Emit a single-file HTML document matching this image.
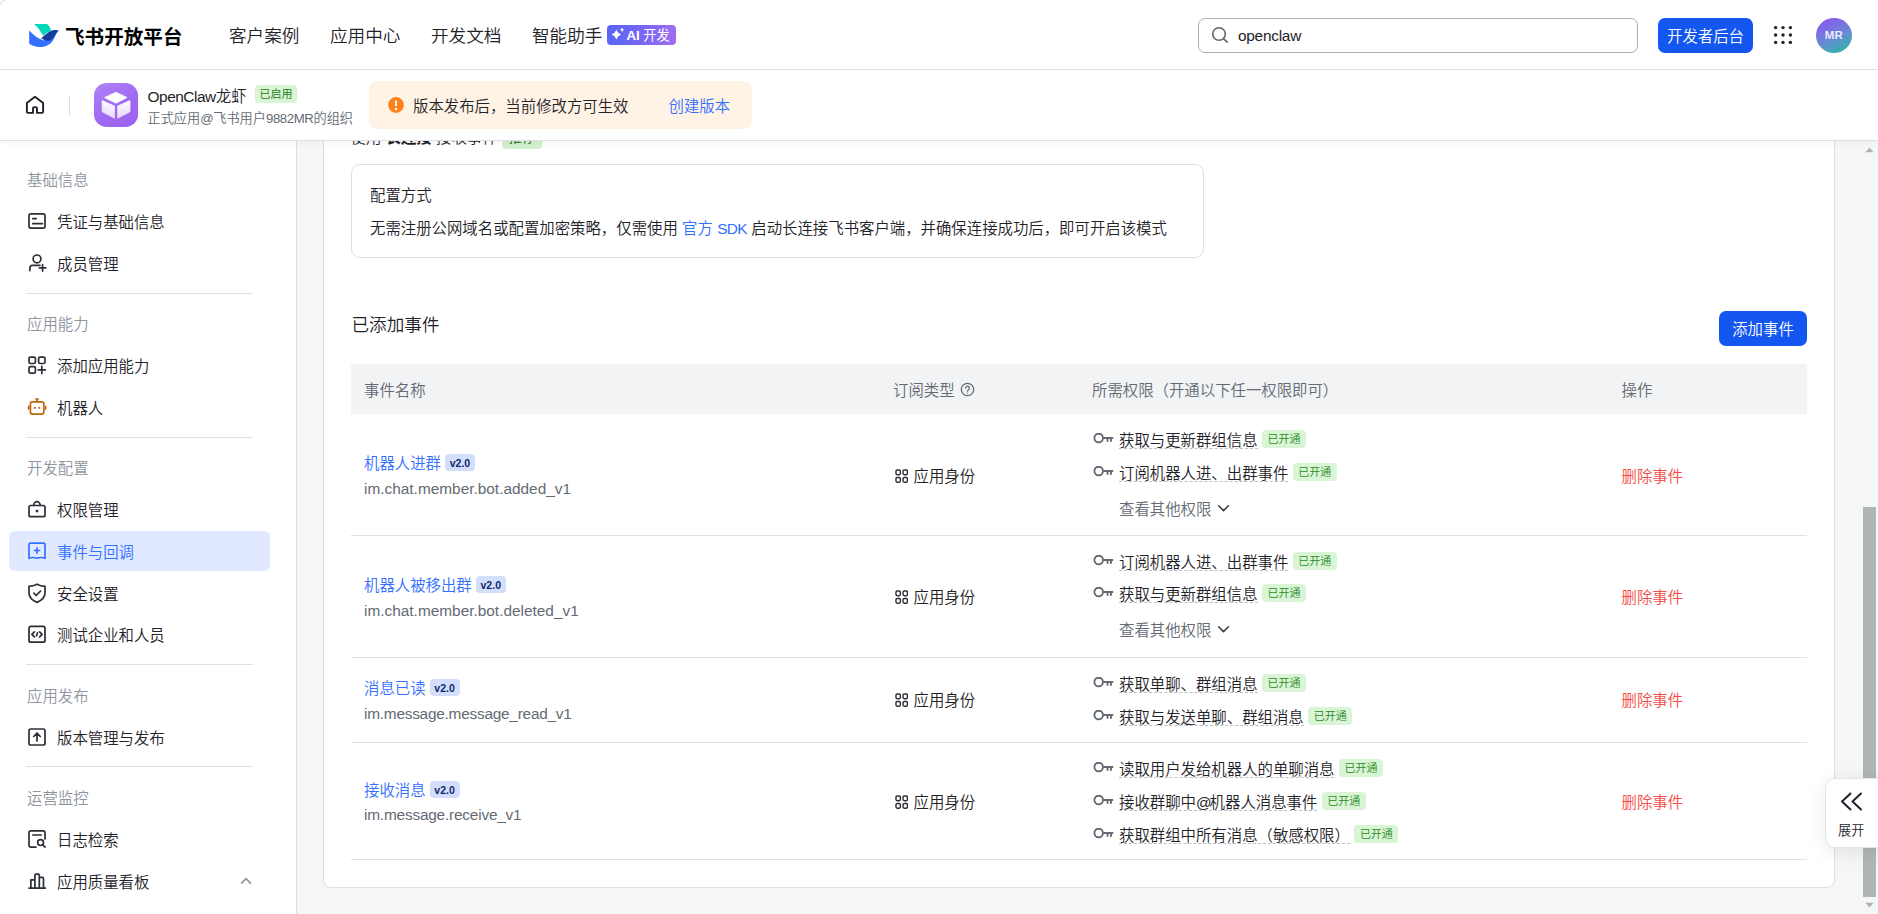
<!DOCTYPE html>
<html lang="zh-CN">
<head>
<meta charset="utf-8">
<title>飞书开放平台</title>
<style>
*{box-sizing:border-box;margin:0;padding:0}
html,body{width:1878px;height:914px;overflow:hidden;background:#fff}
body{font-weight:350;font-family:"Liberation Sans","Noto Sans CJK SC",sans-serif;font-size:15.4px;color:#1f2329;position:relative;-webkit-font-smoothing:antialiased}
a{text-decoration:none;color:#3370ff}
.abs{position:absolute}
b{font-weight:700}
/* top header */
#top{position:absolute;left:0;top:0;width:1878px;height:70px;background:#fff;border-bottom:1px solid #dee0e3;z-index:30}
#top .brand{position:absolute;left:65px;top:22.500px;font-size:19.6px;font-weight:700;line-height:28px;color:#000;letter-spacing:0}
#top .nav{position:absolute;top:22px;font-size:17.6px;line-height:28px;color:#1f2329;white-space:nowrap}
#top .aibadge{position:absolute;left:607px;top:25px;width:69px;height:20px;border-radius:4px;background:linear-gradient(90deg,#5865f6 0%,#7b68f3 55%,#a06cf0 100%);color:#fff;font-size:13.2px;line-height:20px;white-space:nowrap;font-weight:700}
#search{position:absolute;left:1198px;top:18px;width:440px;height:35px;border:1px solid #aaaeb5;border-radius:7px;background:#fff}
#search span{position:absolute;left:39px;top:0;line-height:33px;font-size:15.4px;color:#1f2329;letter-spacing:-.25px}
#devbtn{position:absolute;left:1658px;top:18px;width:95px;height:35px;border-radius:7px;background:#1456f0;color:#fff;font-size:15.4px;line-height:37px;text-align:center}
#avatar{position:absolute;left:1816px;top:18px;width:36px;height:35px;border-radius:50%;background:linear-gradient(155deg,#8e56f0 8%,#6a86d6 52%,#2cbaa2 94%);color:#eeeaff;font-size:11.500px;font-weight:700;line-height:35px;text-align:center;letter-spacing:.2px}
/* sub header */
#sub{position:absolute;left:0;top:70px;width:1878px;height:71px;background:#fff;border-bottom:1px solid #dee0e3;z-index:29;box-shadow:0 2px 6px rgba(31,35,41,.04)}
#appicon{position:absolute;left:94px;top:13px;width:44px;height:44px;border-radius:12.500px;background:linear-gradient(150deg,#ae82f7 0%,#a06af2 55%,#9c60ef 100%)}
#appname{position:absolute;left:147.500px;top:16px;line-height:22px;font-size:15.4px;color:#1f2329;white-space:nowrap}
#enabled{position:absolute;left:255px;top:15px;width:42px;height:18px;border-radius:4px;background:#d9f5d6;color:#1a7a12;font-size:11px;line-height:19.500px;text-align:center;white-space:nowrap}
#appsub{position:absolute;left:147.500px;top:38.500px;line-height:20px;font-size:13.2px;color:#646a73;white-space:nowrap}
#notice{position:absolute;left:369px;top:11px;width:383px;height:48px;border-radius:8px;background:#fff3e5}
#notice .t{position:absolute;left:44px;top:0;line-height:51px;font-size:15.4px;color:#1f2329;white-space:nowrap}
#notice a{position:absolute;left:299.500px;top:0;line-height:51px;font-size:15.4px;white-space:nowrap}
/* sidebar */
#side{position:absolute;left:0;top:141px;width:297px;height:773px;background:#fff;border-right:1px solid #dee0e3;z-index:10}
#side .lab{position:absolute;left:27px;font-size:15.4px;line-height:22px;color:#8f959e;white-space:nowrap}
#side .it{position:absolute;left:9px;width:261px;height:40px;border-radius:6px;line-height:43px;font-size:15.4px;color:#1f2329;white-space:nowrap;padding-left:48px}
#side .it svg{position:absolute;left:17px;top:9px;width:22px;height:22px}
#side .it.sel{background:#e0e9ff;color:#3370ff}
#side .hr{position:absolute;left:26px;width:227px;height:1px;background:#dee0e3}
/* main */
#main{position:absolute;left:297px;top:141px;width:1567px;height:773px;background:#f5f6f7}
#card{position:absolute;left:26px;top:-20px;width:1512px;height:767px;background:#fff;border:1px solid #dee0e3;border-radius:8px}
#sb{position:absolute;left:1863px;top:141px;width:15px;height:773px;background:#f5f6f7;z-index:5}
#sb i{position:absolute;left:0;top:366px;width:13px;height:390px;background:#b2b5b6}

#content{position:absolute;left:0;top:0;width:1878px;height:914px;z-index:6}
.ln{position:absolute;white-space:nowrap;color:#1f2329}
.t15{font-size:15.4px}
.t17{font-size:17.6px}
.g{color:#646a73}
.lk{color:#3370ff}
.lat{letter-spacing:-.6px}
.del{color:#f54a45}
.rec{display:inline-block;vertical-align:top;margin-left:0;margin-top:-.5px;width:40px;height:22px;line-height:22px;border-radius:4px;background:#d0f0cd;color:#186010;font-size:13.2px;text-align:center}
#cfg{position:absolute;left:351px;top:164px;width:853px;height:94px;border:1px solid #dee0e3;border-radius:9px;background:#fff}
#addbtn{position:absolute;left:1719px;top:311px;width:88px;height:35px;border-radius:7px;background:#1456f0;color:#fff;font-size:15.4px;line-height:37px;text-align:center}
#thead{position:absolute;left:351px;top:364px;width:1456px;height:49.500px;background:#f2f3f5}
.rb{position:absolute;left:351px;width:1456px;height:1px;background:#dee0e3}
.ver{display:inline-block;vertical-align:top;margin-left:4px;margin-top:1px;width:30px;height:17px;line-height:18.500px;border-radius:4px;background:#d3defc;color:#0c296e;font-size:10.500px;font-weight:700;text-align:center}
.appi{position:absolute;left:.2px;top:2.500px;width:13.400px;height:14.200px}
.key{position:absolute;left:.6px;top:3px;width:21px;height:11px}
.pm{display:inline-block;vertical-align:top;height:19px;line-height:22px;border-bottom:1px dashed #bbbfc4}
.ok{display:inline-block;vertical-align:top;margin-left:4.500px;margin-top:0;width:44px;height:18px;line-height:19.500px;border-radius:4px;background:#d9f5d6;color:#2a8a1f;font-size:11px;text-align:center}
.chev{display:inline-block;vertical-align:top;margin-left:6px;margin-top:4.500px;width:13px;height:9px}
#expand{position:absolute;left:1825px;top:778px;width:70px;height:70px;border-radius:10px;background:#fff;border:1px solid #e4e5e7;box-shadow:0 4px 18px rgba(31,35,41,.10);z-index:8}
#expand span{position:absolute;left:12px;top:41.500px;font-size:13.200px;line-height:20px;color:#1f2329;white-space:nowrap}
</style>
</head>
<body>
<svg class="abs" style="left:0;top:0;z-index:40" width="8" height="8" viewBox="0 0 8 8"><path d="M.3 5.600A5.300 5.300 0 0 1 5.600 .3" stroke="#e4e7ee" fill="none" stroke-width="1.300"/></svg>
<div id="top">
  <svg class="abs" style="left:28px;top:23px" width="32" height="26" viewBox="0 0 32 26">
    <path d="M6 1H19.200C21.200 3 22.500 5.500 23 7.800C20 8.800 17.500 10.500 15.200 13C13 8.500 10 4.200 6 1z" fill="#00d6b9"/>
    <path d="M1.200 7.600c4.800 5.200 9.600 8.600 14.600 9.800 4.200-1.200 6.800-5.600 9.800-8.400 1.600-1.200 3.200-1.600 5-1.400-2.400 2.600-3.200 6.400-5.600 9.800-3 4.400-8 6.600-13.400 6.600-4 0-7.800-1.200-10.400-3.200z" fill="#3370ff"/>
    <path d="M30.600 7.600c-1.800-.6-4.400-.7-6.600-.1-4 1.200-6.400 4.300-10.800 7.700 1.400 1 3.200 1.900 5.200 2.300 2.600.5 5.200-.2 6.800-2.700 1.800-2.900 3-5.400 5.400-7.200z" fill="#133c9a"/>
  </svg>
  <div class="brand">飞书开放平台</div>
  <div class="nav" style="left:229px">客户案例</div>
  <div class="nav" style="left:330px">应用中心</div>
  <div class="nav" style="left:431px">开发文档</div>
  <div class="nav" style="left:532px">智能助手</div>
  <div class="aibadge"><svg class="abs" style="left:0;top:0" width="20" height="20" viewBox="0 0 20 20"><path d="M9.4 4.80Q10.70 8.30 14.20 9.6Q10.70 10.90 9.4 14.40Q8.10 10.90 4.60 9.6Q8.10 8.30 9.4 4.80z" fill="#fff"/><path d="M15.1 2.70Q15.62 4.27 17.20 4.8Q15.62 5.33 15.1 6.90Q14.57 5.33 13.00 4.8Q14.57 4.27 15.1 2.70z" fill="#fff"/></svg><span class="abs" style="left:19.500px;top:.5px">AI <span style="font-weight:400">开发</span></span></div>
  <div id="search">
    <svg class="abs" style="left:11px;top:5.700px" width="20" height="20" viewBox="0 0 20 20" fill="none" stroke="#5f6670" stroke-width="1.600" stroke-linecap="round"><circle cx="9" cy="9" r="6.300"/><path d="M13.700 13.800l3.500 3.300"/></svg>
    <span>openclaw</span>
  </div>
  <div id="devbtn">开发者后台</div>
  <svg class="abs" style="left:1773px;top:25px" width="20" height="20" viewBox="0 0 20 20" fill="#1f2329"><circle cx="2.600" cy="2.600" r="1.700"/><circle cx="10" cy="2.600" r="1.700"/><circle cx="17.400" cy="2.600" r="1.700"/><circle cx="2.600" cy="10" r="1.700"/><circle cx="10" cy="10" r="1.700"/><circle cx="17.400" cy="10" r="1.700"/><circle cx="2.600" cy="17.400" r="1.700"/><circle cx="10" cy="17.400" r="1.700"/><circle cx="17.400" cy="17.400" r="1.700"/></svg>
  <div id="avatar">MR</div>
</div>

<div id="sub">
  <svg class="abs" style="left:24px;top:24px" width="22" height="22" viewBox="0 0 22 22" fill="none" stroke="#1f2329" stroke-width="1.900" stroke-linejoin="round" stroke-linecap="round"><path d="M2.900 8.900L11 2.800l8.100 6.100v8.900a1.100 1.100 0 0 1-1.100 1.100h-5.050v-4.600a1.200 1.200 0 0 0-1.200-1.200h-1.500a1.200 1.200 0 0 0-1.200 1.200v4.600H4a1.100 1.100 0 0 1-1.100-1.100z"/></svg>
  <div class="abs" style="left:69px;top:27px;width:1px;height:18px;background:#d8dadd"></div>
  <div id="appicon"><svg class="abs" style="left:0;top:0" width="44" height="44" viewBox="0 0 44 44"><defs><linearGradient id="cg" x1="0" y1="0" x2="0" y2="1"><stop offset="0" stop-color="#fdfbff"/><stop offset="1" stop-color="#e9d8fb"/></linearGradient></defs><path d="M21.900 9.200L33 14.500 22 20.200 10.600 14.500z" fill="#fff" stroke="#fff" stroke-width=".8" stroke-linejoin="round"/><path d="M8.200 17.600l12.300 5.400v12.200L8.200 28.800z" fill="url(#cg)" stroke="url(#cg)" stroke-width=".8" stroke-linejoin="round"/><path d="M36 17.600L23.700 23v12.200L36 28.800z" fill="url(#cg)" stroke="url(#cg)" stroke-width=".8" stroke-linejoin="round"/></svg></div>
  <div id="appname"><span style="letter-spacing:-.45px">OpenClaw</span>龙虾</div>
  <div id="enabled">已启用</div>
  <div id="appsub">正式应用<span style="letter-spacing:-.4px">@</span>飞书用户<span style="letter-spacing:-.4px">9882MR</span>的组织</div>
  <div id="notice">
    <svg class="abs" style="left:17.500px;top:15.300px" width="18" height="18" viewBox="0 0 18 18"><circle cx="9" cy="9" r="7.900" fill="#ff811a"/><rect x="8.100" y="4.200" width="1.800" height="6" rx=".9" fill="#fff"/><circle cx="9" cy="13" r="1.200" fill="#fff"/></svg>
    <span class="t">版本发布后，当前修改方可生效</span>
    <a>创建版本</a>
  </div>
</div>

<div id="side">
  <div class="lab" style="top:28.5px">基础信息</div>
  <div class="it" style="top:60px"><svg viewBox="0 0 22 22" fill="none" stroke="#2b2f36" stroke-width="1.700" stroke-linecap="round" stroke-linejoin="round"><rect x="3" y="3.900" width="16" height="14.200" rx="1.800"/><path d="M6.800 8.600h3.400M6.800 13.700h9.600"/></svg>凭证与基础信息</div>
  <div class="it" style="top:102px"><svg viewBox="0 0 22 22" fill="none" stroke="#2b2f36" stroke-width="1.700" stroke-linecap="round" stroke-linejoin="round"><circle cx="11" cy="6.900" r="3.900"/><path d="M3.900 18.600v-2.800a2.400 2.400 0 0 1 2.400-2.400h7.600"/><path d="M16.600 12.700v6.400M13.400 15.900h6.400"/></svg>成员管理</div>
  <div class="hr" style="top:152px"></div>
  <div class="lab" style="top:172.5px">应用能力</div>
  <div class="it" style="top:204px"><svg viewBox="0 0 22 22" fill="none" stroke="#2b2f36" stroke-width="1.700" stroke-linecap="round" stroke-linejoin="round"><rect x="3" y="3.100" width="6.400" height="6.400" rx="1.400"/><rect x="12.600" y="3.100" width="6.400" height="6.400" rx="1.400"/><rect x="3" y="12.700" width="6.400" height="6.400" rx="1.400"/><path d="M15.800 12.400v7M12.300 15.900h7"/></svg>添加应用能力</div>
  <div class="it" style="top:246px"><svg viewBox="0 0 22 22" fill="none" stroke="#c2660c" stroke-width="1.700" stroke-linecap="round" stroke-linejoin="round"><rect x="4.400" y="5.800" width="13.400" height="12.300" rx="2"/><path d="M11.100 5.600V3.200M10 3h2.200M2.600 10.400v2.600M19.600 10.400v2.600"/><circle cx="8.900" cy="11.800" r="1.100" fill="#c2660c" stroke="none"/><circle cx="13.300" cy="11.800" r="1.100" fill="#c2660c" stroke="none"/></svg>机器人</div>
  <div class="hr" style="top:296px"></div>
  <div class="lab" style="top:316.5px">开发配置</div>
  <div class="it" style="top:348px"><svg viewBox="0 0 22 22" fill="none" stroke="#2b2f36" stroke-width="1.700" stroke-linecap="round" stroke-linejoin="round"><rect x="3" y="7.500" width="16" height="11.200" rx="1.800"/><path d="M7.800 7.300a3.200 3.600 0 0 1 6.400 0"/><circle cx="11" cy="13.100" r="1.400" fill="#2b2f36" stroke="none"/></svg>权限管理</div>
  <div class="it sel" style="top:390px"><svg viewBox="0 0 22 22" fill="none" stroke="#3370ff" stroke-width="1.700" stroke-linecap="round" stroke-linejoin="round"><path d="M4.500 3.200h13a1.500 1.500 0 0 1 1.500 1.500v13.600c-2.800-1.100-5.200-1.100-8-.1-2.800-1-5.200-1-8 .1V4.700a1.500 1.500 0 0 1 1.500-1.500z"/><path d="M11 7.900v5.200M8.400 10.500h5.200"/></svg>事件与回调</div>
  <div class="it" style="top:432px"><svg viewBox="0 0 22 22" fill="none" stroke="#2b2f36" stroke-width="1.700" stroke-linecap="round" stroke-linejoin="round"><path d="M11 2.200c2.400 1.300 4.900 2 8 2.200v6.400c0 4.600-3.400 7.700-8 9.600-4.600-1.900-8-5-8-9.600V4.400c3.100-.2 5.600-.9 8-2.200z"/><path d="M7.800 11.200l2.400 2.300 4.300-4.300"/></svg>安全设置</div>
  <div class="it" style="top:473px"><svg viewBox="0 0 22 22" fill="none" stroke="#2b2f36" stroke-width="1.700" stroke-linecap="round" stroke-linejoin="round"><rect x="3" y="3.400" width="16" height="15.800" rx="1.800"/><path d="M8.400 8.800L5.900 11.300l2.500 2.500M13.600 8.800l2.500 2.500-2.500 2.500M11.500 9.800l-1 3"/></svg>测试企业和人员</div>
  <div class="hr" style="top:523px"></div>
  <div class="lab" style="top:544.5px">应用发布</div>
  <div class="it" style="top:576px"><svg viewBox="0 0 22 22" fill="none" stroke="#2b2f36" stroke-width="1.700" stroke-linecap="round" stroke-linejoin="round"><rect x="3" y="3" width="16" height="16" rx="1.800"/><path d="M11 15V7.400M7.700 10.500L11 7.200l3.300 3.300"/></svg>版本管理与发布</div>
  <div class="hr" style="top:625px"></div>
  <div class="lab" style="top:646.5px">运营监控</div>
  <div class="it" style="top:678px"><svg viewBox="0 0 22 22" fill="none" stroke="#2b2f36" stroke-width="1.700" stroke-linecap="round" stroke-linejoin="round"><path d="M10 19.100H4.800a1.800 1.800 0 0 1-1.800-1.800V4.700a1.800 1.800 0 0 1 1.800-1.800h12.400a1.800 1.800 0 0 1 1.800 1.800v6.200"/><path d="M6.800 7h8.400"/><circle cx="14.600" cy="14.600" r="2.900"/><path d="M16.800 16.900l2.300 2.300"/></svg>日志检索</div>
  <div class="it" style="top:720px"><svg viewBox="0 0 22 22" fill="none" stroke="#2b2f36" stroke-width="1.700" stroke-linecap="round" stroke-linejoin="round"><path d="M3 18.100h16.400"/><path d="M4.900 18.100V9.800h4M8.900 18.100V5.300a1.200 1.200 0 0 1 1.200-1.200h2a1.200 1.200 0 0 1 1.200 1.200v12.800M13.300 7.400h3a1.200 1.200 0 0 1 1.200 1.200v9.500"/></svg>应用质量看板<svg style="left:229px;top:12px;width:16px;height:16px" viewBox="0 0 16 16" fill="none" stroke="#8f959e" stroke-width="1.700" stroke-linecap="round" stroke-linejoin="round"><path d="M3.600 10.100L8 5.700l4.400 4.400"/></svg></div>
</div>
<div id="main"><div id="card"><!--CARD--></div></div>
<div id="content">
<!--MAIN-START-->
<div class="ln t15" style="left:350.5px;top:127px;height:22px;line-height:22px">使用 <b>长连接</b> 接收事件 <span class="rec">推荐</span></div>
<div id="cfg"></div>
<div class="ln t15" style="left:370px;top:185px;height:22px;line-height:22px">配置方式</div>
<div class="ln t15" style="left:370px;top:218px;height:22px;line-height:22px">无需注册公网域名或配置加密策略，仅需使用 <a>官方 <span class="lat">SDK</span></a> 启动长连接飞书客户端，并确保连接成功后，即可开启该模式</div>
<div class="ln t17" style="left:351.5px;top:312px;height:26px;line-height:26px">已添加事件</div>
<div id="addbtn">添加事件</div>
<div id="thead"></div>
<div class="ln t15 g" style="left:364px;top:380px;height:22px;line-height:22px">事件名称</div>
<div class="ln t15 g" style="left:893px;top:380px;height:22px;line-height:22px">订阅类型</div>
<svg class="abs" style="left:960px;top:382px" width="15" height="15" viewBox="0 0 15 15" fill="none" stroke="#646a73" stroke-width="1.300" stroke-linecap="round"><circle cx="7.500" cy="7.500" r="6.200"/><path d="M5.600 6.100a1.900 1.900 0 1 1 2.900 1.600c-.7.400-1 .8-1 1.500"/><circle cx="7.500" cy="11" r=".6" fill="#646a73" stroke="none"/></svg>
<div class="ln t15 g" style="left:1092px;top:380px;height:22px;line-height:22px">所需权限（开通以下任一权限即可）</div>
<div class="ln t15 g" style="left:1621.5px;top:380px;height:22px;line-height:22px">操作</div>
<div class="rb" style="top:535px"></div>
<div class="ln t15 lk" style="left:364px;top:453px;height:22px;line-height:22px">机器人进群<span class="ver">v2.0</span></div>
<div class="ln t15 g" style="left:364px;top:478px;height:22px;line-height:22px;letter-spacing:0px">im.chat.member.bot.added_v1</div>
<div class="ln t15" style="left:894.5px;top:466px;height:22px;line-height:22px;padding-left:19px"><svg class="appi" preserveAspectRatio="none" viewBox="0 0 14 14" fill="none" stroke="#2b2f36" stroke-width="1.500"><rect x="1" y="1" width="4.600" height="4.600" rx="1.300"/><rect x="8.400" y="1" width="4.600" height="4.600" rx="1.300"/><rect x="1" y="8.400" width="4.600" height="4.600" rx="1.300"/><rect x="8.400" y="8.400" width="4.600" height="4.600" rx="1.300"/></svg>应用身份</div>
<div class="ln t15" style="left:1092px;top:430px;height:22px;line-height:22px;padding-left:27px"><svg class="key" viewBox="0 0 21 11"><circle cx="5.700" cy="5" r="4.300" fill="none" stroke="#646a73" stroke-width="1.900"/><path d="M10.500 3.900h9.700v2.100h-1.300v2.800h-1.900V6h-1.500v2.800h-1.900V6h-3.100z" fill="#646a73"/></svg><span class="pm">获取与更新群组信息</span><span class="ok">已开通</span></div>
<div class="ln t15" style="left:1092px;top:463px;height:22px;line-height:22px;padding-left:27px"><svg class="key" viewBox="0 0 21 11"><circle cx="5.700" cy="5" r="4.300" fill="none" stroke="#646a73" stroke-width="1.900"/><path d="M10.500 3.900h9.700v2.100h-1.300v2.800h-1.900V6h-1.500v2.800h-1.900V6h-3.100z" fill="#646a73"/></svg><span class="pm">订阅机器人进、出群事件</span><span class="ok">已开通</span></div>
<div class="ln t15 g" style="left:1119px;top:499px;height:22px;line-height:22px">查看其他权限<svg class="chev" viewBox="0 0 14 10" fill="none" stroke="#3c4048" stroke-width="1.800" stroke-linecap="round" stroke-linejoin="round"><path d="M1.600 2l5.400 5.400L12.400 2"/></svg></div>
<div class="ln t15 del" style="left:1621.5px;top:466px;height:22px;line-height:22px">删除事件</div>
<div class="rb" style="top:657px"></div>
<div class="ln t15 lk" style="left:364px;top:575px;height:22px;line-height:22px">机器人被移出群<span class="ver">v2.0</span></div>
<div class="ln t15 g" style="left:364px;top:600px;height:22px;line-height:22px;letter-spacing:0px">im.chat.member.bot.deleted_v1</div>
<div class="ln t15" style="left:894.5px;top:587px;height:22px;line-height:22px;padding-left:19px"><svg class="appi" preserveAspectRatio="none" viewBox="0 0 14 14" fill="none" stroke="#2b2f36" stroke-width="1.500"><rect x="1" y="1" width="4.600" height="4.600" rx="1.300"/><rect x="8.400" y="1" width="4.600" height="4.600" rx="1.300"/><rect x="1" y="8.400" width="4.600" height="4.600" rx="1.300"/><rect x="8.400" y="8.400" width="4.600" height="4.600" rx="1.300"/></svg>应用身份</div>
<div class="ln t15" style="left:1092px;top:552px;height:22px;line-height:22px;padding-left:27px"><svg class="key" viewBox="0 0 21 11"><circle cx="5.700" cy="5" r="4.300" fill="none" stroke="#646a73" stroke-width="1.900"/><path d="M10.500 3.900h9.700v2.100h-1.300v2.800h-1.900V6h-1.500v2.800h-1.900V6h-3.100z" fill="#646a73"/></svg><span class="pm">订阅机器人进、出群事件</span><span class="ok">已开通</span></div>
<div class="ln t15" style="left:1092px;top:584px;height:22px;line-height:22px;padding-left:27px"><svg class="key" viewBox="0 0 21 11"><circle cx="5.700" cy="5" r="4.300" fill="none" stroke="#646a73" stroke-width="1.900"/><path d="M10.500 3.900h9.700v2.100h-1.300v2.800h-1.900V6h-1.500v2.800h-1.900V6h-3.100z" fill="#646a73"/></svg><span class="pm">获取与更新群组信息</span><span class="ok">已开通</span></div>
<div class="ln t15 g" style="left:1119px;top:620px;height:22px;line-height:22px">查看其他权限<svg class="chev" viewBox="0 0 14 10" fill="none" stroke="#3c4048" stroke-width="1.800" stroke-linecap="round" stroke-linejoin="round"><path d="M1.600 2l5.400 5.400L12.400 2"/></svg></div>
<div class="ln t15 del" style="left:1621.5px;top:587px;height:22px;line-height:22px">删除事件</div>
<div class="rb" style="top:742px"></div>
<div class="ln t15 lk" style="left:364px;top:678px;height:22px;line-height:22px">消息已读<span class="ver">v2.0</span></div>
<div class="ln t15 g" style="left:364px;top:703px;height:22px;line-height:22px;letter-spacing:-0.24px">im.message.message_read_v1</div>
<div class="ln t15" style="left:894.5px;top:690px;height:22px;line-height:22px;padding-left:19px"><svg class="appi" preserveAspectRatio="none" viewBox="0 0 14 14" fill="none" stroke="#2b2f36" stroke-width="1.500"><rect x="1" y="1" width="4.600" height="4.600" rx="1.300"/><rect x="8.400" y="1" width="4.600" height="4.600" rx="1.300"/><rect x="1" y="8.400" width="4.600" height="4.600" rx="1.300"/><rect x="8.400" y="8.400" width="4.600" height="4.600" rx="1.300"/></svg>应用身份</div>
<div class="ln t15" style="left:1092px;top:674px;height:22px;line-height:22px;padding-left:27px"><svg class="key" viewBox="0 0 21 11"><circle cx="5.700" cy="5" r="4.300" fill="none" stroke="#646a73" stroke-width="1.900"/><path d="M10.500 3.900h9.700v2.100h-1.300v2.800h-1.900V6h-1.500v2.800h-1.900V6h-3.100z" fill="#646a73"/></svg><span class="pm">获取单聊、群组消息</span><span class="ok">已开通</span></div>
<div class="ln t15" style="left:1092px;top:707px;height:22px;line-height:22px;padding-left:27px"><svg class="key" viewBox="0 0 21 11"><circle cx="5.700" cy="5" r="4.300" fill="none" stroke="#646a73" stroke-width="1.900"/><path d="M10.500 3.900h9.700v2.100h-1.300v2.800h-1.900V6h-1.500v2.800h-1.900V6h-3.100z" fill="#646a73"/></svg><span class="pm">获取与发送单聊、群组消息</span><span class="ok">已开通</span></div>
<div class="ln t15 del" style="left:1621.5px;top:690px;height:22px;line-height:22px">删除事件</div>
<div class="rb" style="top:859px"></div>
<div class="ln t15 lk" style="left:364px;top:780px;height:22px;line-height:22px">接收消息<span class="ver">v2.0</span></div>
<div class="ln t15 g" style="left:364px;top:804px;height:22px;line-height:22px;letter-spacing:-0.2px">im.message.receive_v1</div>
<div class="ln t15" style="left:894.5px;top:792px;height:22px;line-height:22px;padding-left:19px"><svg class="appi" preserveAspectRatio="none" viewBox="0 0 14 14" fill="none" stroke="#2b2f36" stroke-width="1.500"><rect x="1" y="1" width="4.600" height="4.600" rx="1.300"/><rect x="8.400" y="1" width="4.600" height="4.600" rx="1.300"/><rect x="1" y="8.400" width="4.600" height="4.600" rx="1.300"/><rect x="8.400" y="8.400" width="4.600" height="4.600" rx="1.300"/></svg>应用身份</div>
<div class="ln t15" style="left:1092px;top:759px;height:22px;line-height:22px;padding-left:27px"><svg class="key" viewBox="0 0 21 11"><circle cx="5.700" cy="5" r="4.300" fill="none" stroke="#646a73" stroke-width="1.900"/><path d="M10.500 3.900h9.700v2.100h-1.300v2.800h-1.900V6h-1.500v2.800h-1.900V6h-3.100z" fill="#646a73"/></svg><span class="pm">读取用户发给机器人的单聊消息</span><span class="ok">已开通</span></div>
<div class="ln t15" style="left:1092px;top:792px;height:22px;line-height:22px;padding-left:27px"><svg class="key" viewBox="0 0 21 11"><circle cx="5.700" cy="5" r="4.300" fill="none" stroke="#646a73" stroke-width="1.900"/><path d="M10.500 3.900h9.700v2.100h-1.300v2.800h-1.900V6h-1.500v2.800h-1.900V6h-3.100z" fill="#646a73"/></svg><span class="pm">接收群聊中<span style="letter-spacing:-2px">@</span>机器人消息事件</span><span class="ok">已开通</span></div>
<div class="ln t15" style="left:1092px;top:825px;height:22px;line-height:22px;padding-left:27px"><svg class="key" viewBox="0 0 21 11"><circle cx="5.700" cy="5" r="4.300" fill="none" stroke="#646a73" stroke-width="1.900"/><path d="M10.500 3.900h9.700v2.100h-1.300v2.800h-1.900V6h-1.500v2.800h-1.900V6h-3.100z" fill="#646a73"/></svg><span class="pm">获取群组中所有消息（敏感权限）</span><span class="ok">已开通</span></div>
<div class="ln t15 del" style="left:1621.5px;top:792px;height:22px;line-height:22px">删除事件</div>
<div id="expand"><svg class="abs" style="left:12px;top:12px" width="26" height="21" viewBox="0 0 26 21" fill="none" stroke="#1f2329" stroke-width="2" stroke-linecap="round" stroke-linejoin="round"><path d="M12.500 2.500L4 10.500l8.500 8M23 2.500l-8.500 8 8.500 8"/></svg><span>展开</span></div>
<!--MAIN-END-->
</div>
<div id="sb"><svg class="abs" style="left:2px;top:6px" width="9" height="6" viewBox="0 0 9 6"><path d="M4.500 .6L8.600 5.200H.4z" fill="#aeb0b2"/></svg><i></i><svg class="abs" style="left:2px;top:761px" width="9" height="6" viewBox="0 0 9 6"><path d="M4.500 5.400L8.600 .8H.4z" fill="#aeb0b2"/></svg></div>
</body>
</html>
